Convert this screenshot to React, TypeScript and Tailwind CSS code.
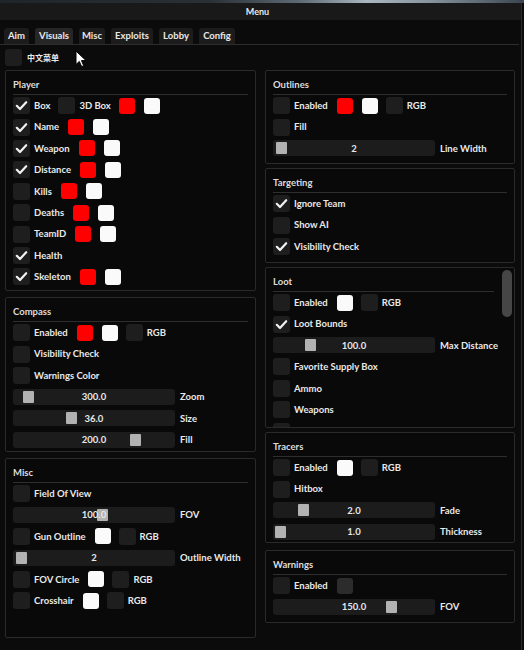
import React from "react";

const FONT = { fontFamily: "Lato, 'Noto Sans', 'Noto Sans CJK SC', sans-serif" };

function Check() {
  return (
    <svg width="17" height="17" viewBox="0 0 17 17">
      <path d="M3.8 8.8 L7 12 L13.2 5.2" fill="none" stroke="#f2f2f2" strokeWidth="2.2" strokeLinecap="round" strokeLinejoin="round" />
    </svg>
  );
}

function CB({ checked = false }: { checked?: boolean }) {
  return (
    <div className="w-[17px] h-[17px] rounded-[3px] bg-[#1e1e1e] flex items-center justify-center shrink-0">
      {checked ? <Check /> : null}
    </div>
  );
}

function Red() {
  return <div className="w-[16px] h-[16px] rounded-[3px] shrink-0 bg-[#ff0000] ml-[9px]" />;
}
function White() {
  return <div className="w-[16px] h-[16px] rounded-[3px] shrink-0 bg-[#fafafa] ml-[9px]" />;
}
function Dark() {
  return <div className="w-[16px] h-[16px] rounded-[3px] shrink-0 bg-[#2c2c2c] ml-[9px]" />;
}

function Lbl({ t }: { t: string }) {
  return <span className="ml-[4px] whitespace-nowrap leading-none">{t}</span>;
}

function Row({ children }: { children: React.ReactNode }) {
  return <div className="h-[21.4px] flex items-center shrink-0">{children}</div>;
}

function CheckRow({ checked, label, children }: { checked?: boolean; label?: string; children?: React.ReactNode }) {
  return (
    <Row>
      <CB checked={checked} />
      {label ? <Lbl t={label} /> : null}
      {children}
    </Row>
  );
}

function RGB() {
  return (
    <>
      <div className="ml-[8px]">
        <CB />
      </div>
      <Lbl t="RGB" />
    </>
  );
}

function Slider({ value, pos, label }: { value: string; pos: number; label: string }) {
  return (
    <Row>
      <div className="relative w-[162px] h-[16px] rounded-[3px] bg-[#1c1c1c] shrink-0">
        <div className="absolute top-[2px] w-[11px] h-[12px] rounded-[1px] bg-[#b2b2b2]" style={{ left: pos }} />
        <div className="absolute inset-0 flex items-center justify-center leading-none">{value}</div>
      </div>
      <span className="ml-[5px] whitespace-nowrap leading-none">{label}</span>
    </Row>
  );
}

function Panel({
  title,
  h,
  mt = 0,
  pr = "pr-[7px]",
  children,
  scroll = false,
}: {
  title: string;
  h: string;
  mt?: number;
  pr?: string;
  children: React.ReactNode;
  scroll?: boolean;
}) {
  return (
    <div
      className={`relative ${h} border border-[#2a2a2a] rounded-[2px] bg-[#090909] pl-[7px] ${pr} pt-[7px] overflow-hidden shrink-0`}
      style={{ marginTop: mt }}
    >
      <div className="h-[14px] flex items-center leading-none text-[#dcdcdc]">{title}</div>
      <div className="h-px bg-[#2e2e2e] mt-[2px]" />
      <div className="flex flex-col">{children}</div>
      {scroll ? (
        <div className="absolute right-[2px] top-[2px] w-[10px] h-[47px] rounded-full bg-[#464646]" />
      ) : null}
    </div>
  );
}

function Tab({ t, w, active = false }: { t: string; w: string; active?: boolean }) {
  return (
    <div
      className={`${w} h-[16px] rounded-t-[3px] flex items-center justify-center leading-none ${
        active ? "bg-[#262626]" : "bg-[#1c1c1c]"
      }`}
    >
      {t}
    </div>
  );
}

export default function App() {
  return (
    <div
      className="w-[524px] h-[650px] bg-[#0b0b0b] overflow-hidden relative text-[9.5px] font-bold text-[#e8e8e8]"
      style={FONT}
    >
      <div className="h-[3px] bg-[linear-gradient(90deg,#20252a_0%,#2b3035_40%,#5d6a75_57%,#aab6c2_70%,#8794a0_82%,#3a4550_100%)]" />
      <div className="w-[522px] border-r border-[#2a2a2a] h-[647px]">
        <div className="h-[17px] bg-[#191919] flex items-center justify-center leading-none text-[9px] pr-[6px]">
          Menu
        </div>
        <div className="pt-[8px]">
          <div className="flex gap-[6px] pl-[4px] border-b border-[#2c2c2c] w-[519px]">
            <Tab t="Aim" w="w-[25px]" />
            <Tab t="Visuals" w="w-[38px]" active />
            <Tab t="Misc" w="w-[26px]" />
            <Tab t="Exploits" w="w-[42px]" />
            <Tab t="Lobby" w="w-[34px]" />
            <Tab t="Config" w="w-[36px]" />
          </div>
          <div className="flex items-center h-[17px] mt-[4px] pl-[5px]">
            <CB />
            <span className="ml-[5px] text-[8px] leading-none" style={{ fontFamily: "'Noto Sans CJK SC', sans-serif" }}>
              中文菜单
            </span>
          </div>
          <div className="flex mt-[4px] pl-[5px] gap-[9px]">
            <div className="w-[251px] flex flex-col">
              <Panel title="Player" h="h-[221px]">
                <CheckRow checked label="Box">
                  <div className="ml-[8px]">
                    <CB />
                  </div>
                  <Lbl t="3D Box" />
                  <div className="ml-[-1px]" />
                  <Red />
                  <White />
                </CheckRow>
                <CheckRow checked label="Name">
                  <Red />
                  <White />
                </CheckRow>
                <CheckRow checked label="Weapon">
                  <Red />
                  <White />
                </CheckRow>
                <CheckRow checked label="Distance">
                  <Red />
                  <White />
                </CheckRow>
                <CheckRow label="Kills">
                  <Red />
                  <White />
                </CheckRow>
                <CheckRow label="Deaths">
                  <Red />
                  <White />
                </CheckRow>
                <CheckRow label="TeamID">
                  <Red />
                  <White />
                </CheckRow>
                <CheckRow checked label="Health" />
                <CheckRow checked label="Skeleton">
                  <Red />
                  <White />
                </CheckRow>
              </Panel>
              <Panel title="Compass" h="h-[155px]" mt={6}>
                <CheckRow label="Enabled">
                  <Red />
                  <White />
                  <RGB />
                </CheckRow>
                <CheckRow label="Visibility Check" />
                <CheckRow label="Warnings Color" />
                <Slider value="300.0" pos={10} label="Zoom" />
                <Slider value="36.0" pos={53} label="Size" />
                <Slider value="200.0" pos={117} label="Fill" />
              </Panel>
              <Panel title="Misc" h="h-[180px]" mt={6}>
                <CheckRow label="Field Of View" />
                <Slider value="100.0" pos={84} label="FOV" />
                <CheckRow label="Gun Outline">
                  <White />
                  <RGB />
                </CheckRow>
                <Slider value="2" pos={3} label="Outline Width" />
                <CheckRow label="FOV Circle">
                  <White />
                  <RGB />
                </CheckRow>
                <CheckRow label="Crosshair">
                  <White />
                  <RGB />
                </CheckRow>
              </Panel>
            </div>
            <div className="w-[250px] flex flex-col">
              <Panel title="Outlines" h="h-[94px]">
                <CheckRow label="Enabled">
                  <Red />
                  <White />
                  <RGB />
                </CheckRow>
                <CheckRow label="Fill" />
                <Slider value="2" pos={3} label="Line Width" />
              </Panel>
              <Panel title="Targeting" h="h-[95px]" mt={4}>
                <CheckRow checked label="Ignore Team" />
                <CheckRow label="Show AI" />
                <CheckRow checked label="Visibility Check" />
              </Panel>
              <Panel title="Loot" h="h-[161px]" mt={4} pr="pr-[20px]" scroll>
                <CheckRow label="Enabled">
                  <White />
                  <RGB />
                </CheckRow>
                <CheckRow checked label="Loot Bounds" />
                <Slider value="100.0" pos={32} label="Max Distance" />
                <CheckRow label="Favorite Supply Box" />
                <CheckRow label="Ammo" />
                <CheckRow label="Weapons" />
                <CheckRow />
              </Panel>
              <Panel title="Tracers" h="h-[111px]" mt={4}>
                <CheckRow label="Enabled">
                  <White />
                  <RGB />
                </CheckRow>
                <CheckRow label="Hitbox" />
                <Slider value="2.0" pos={25} label="Fade" />
                <Slider value="1.0" pos={2} label="Thickness" />
              </Panel>
              <Panel title="Warnings" h="h-[73px]" mt={7}>
                <CheckRow label="Enabled">
                  <Dark />
                </CheckRow>
                <Slider value="150.0" pos={113} label="FOV" />
              </Panel>
            </div>
          </div>
        </div>
      </div>
      <svg className="absolute left-[75px] top-[50px]" width="13" height="18" viewBox="0 0 13 18">
        <path d="M1 1 L1 14.5 L4.3 11.4 L6.6 16.6 L8.7 15.7 L6.5 10.6 L11 10.6 Z" fill="#ffffff" stroke="#000000" strokeWidth="1" strokeLinejoin="round" />
      </svg>
    </div>
  );
}
